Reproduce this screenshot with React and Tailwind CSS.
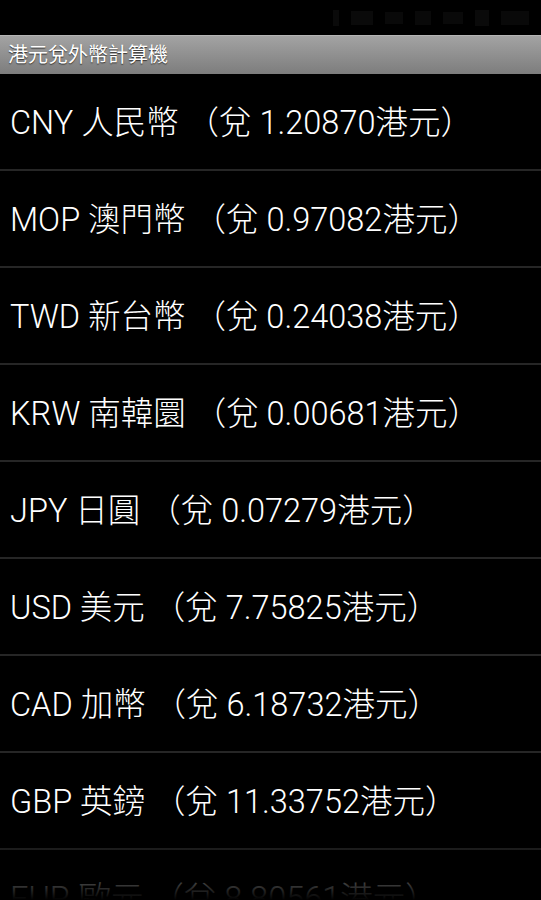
import React from "react";

const rates = [
  { code: "CNY", name: "人民幣", rate: "1.20870" },
  { code: "MOP", name: "澳門幣", rate: "0.97082" },
  { code: "TWD", name: "新台幣", rate: "0.24038" },
  { code: "KRW", name: "南韓圜", rate: "0.00681" },
  { code: "JPY", name: "日圓", rate: "0.07279" },
  { code: "USD", name: "美元", rate: "7.75825" },
  { code: "CAD", name: "加幣", rate: "6.18732" },
  { code: "GBP", name: "英鎊", rate: "11.33752" },
  { code: "EUR", name: "歐元", rate: "8.80561" },
];

const font = { fontFamily: 'Roboto, "Noto Sans CJK TC", sans-serif' };

const StatusBar = () => (
  <div className="h-[35px] bg-black flex items-center justify-end gap-3 pr-3">
    <div className="w-[6px] h-[16px] bg-[#0a0a0a]" />
    <div className="w-[22px] h-[14px] bg-[#0a0a0a]" />
    <div className="w-[18px] h-[12px] bg-[#090909]" />
    <div className="w-[16px] h-[14px] bg-[#090909]" />
    <div className="w-[20px] h-[12px] bg-[#090909]" />
    <div className="w-[14px] h-[16px] bg-[#0a0a0a]" />
    <div className="w-[28px] h-[14px] bg-[#090909]" />
  </div>
);

const RateRow = ({ item }) => (
  <div className="h-[97px] shrink-0 flex items-center pl-[10px] pt-[3px] border-b-2 border-[#262626]">
    <span className="text-[32.5px] font-light text-white leading-none whitespace-nowrap">
      {item.code} {item.name} （兌 {item.rate}港元）
    </span>
  </div>
);

export default function App() {
  return (
    <div className="w-[541px] h-[900px] bg-black overflow-hidden flex flex-col" style={font}>
      <StatusBar />
      <div className="h-[39px] shrink-0 flex items-center px-[8px] border-t border-[#b5b5b5] bg-gradient-to-b from-[#a3a3a3] to-[#7d7d7d]">
        <span className="text-[20px] text-white leading-none [text-shadow:0_1px_1px_#333]">
          港元兌外幣計算機
        </span>
      </div>
      <div className="relative flex-1 flex flex-col overflow-hidden">
        {rates.map((r) => (
          <RateRow key={r.code} item={r} />
        ))}
        <div className="absolute left-0 right-0 bottom-0 h-[70px] bg-gradient-to-b from-transparent to-black pointer-events-none" />
      </div>
    </div>
  );
}
